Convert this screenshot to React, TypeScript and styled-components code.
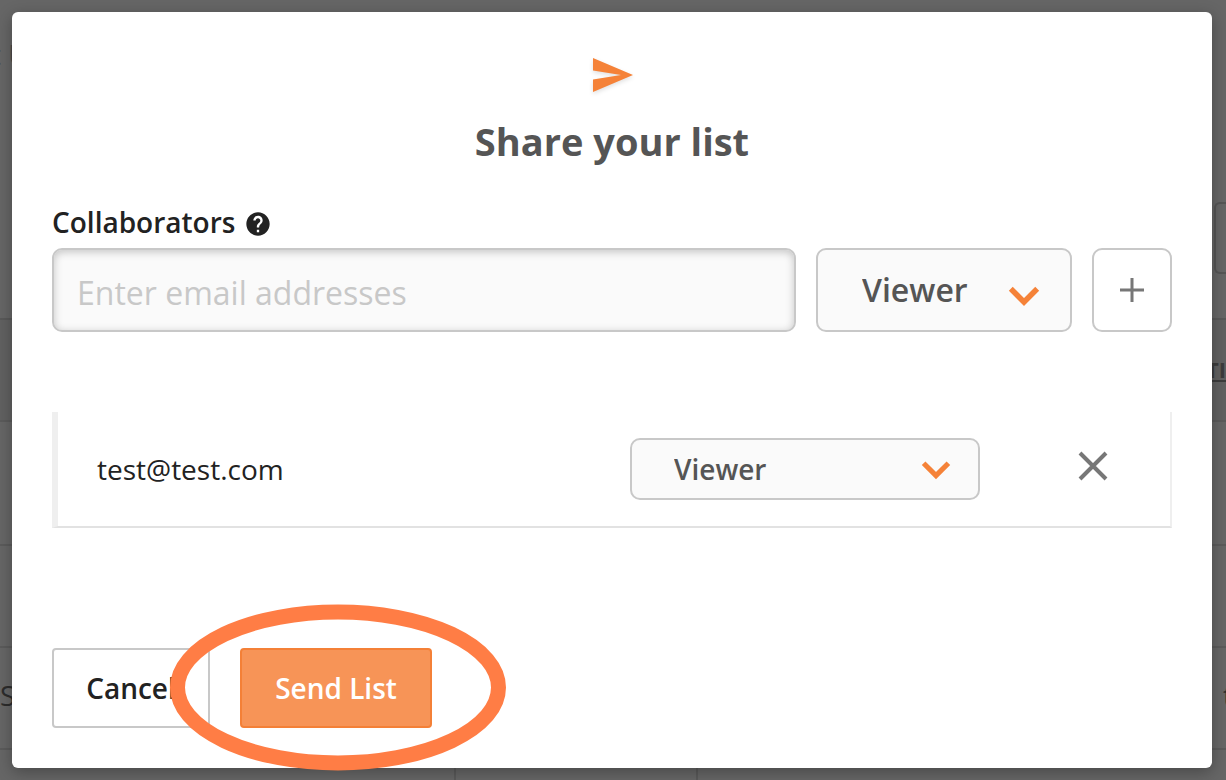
import React from "react";
import styled, { createGlobalStyle, css } from "styled-components";

const GlobalStyle = createGlobalStyle`
  *, *::before, *::after { box-sizing: border-box; }
  body {
    margin: 0;
    background: #666;
    color: #222;
    font-family: "Open Sans", "Noto Sans", sans-serif;
    font-size: 28px;
    line-height: 40px;
  }
  button, input, select { font: inherit; color: inherit; margin: 0; }
`;

const Screen = styled.div`
  position: relative;
  min-height: 100vh;
  overflow: hidden;
`;

const Backdrop = styled.div`
  position: absolute;
  inset: 0;
  overflow: hidden;
  background: #666;
`;

const PageTop = styled.div`
  height: 320px;
  border-bottom: 2px solid #595959;
  display: flex;
  justify-content: space-between;
  color: #4a4a4a;
`;

const PageTitle = styled.div`
  padding-top: 34px;
  margin-left: -9px;
`;

const PageFilter = styled.div`
  width: 12px;
  height: 72px;
  margin-top: 202px;
  border: 2px solid #555;
  border-right: 0;
  border-radius: 6px 0 0 6px;
`;

const PageRow = styled.div<{ $head?: boolean }>`
  display: flex;
  justify-content: space-between;
  align-items: center;
  height: 102px;
  padding-bottom: 6px;
  border-bottom: 2px solid #5b5b5b;
  color: #2c2c2c;
  ${(p) =>
    p.$head &&
    css`
      padding-bottom: 2px;
      background: #616161;
      color: #3c3c3c;
      font-size: 22px;
      font-weight: 700;
      text-decoration: underline;
    `}
`;

const PageRowTall = styled(PageRow)`
  height: 124px;
`;

const PageColumns = styled.div`
  display: grid;
  grid-template-columns: 454px 242px 1fr;
  height: 40px;

  > span + span {
    border-left: 2px solid #5a5a5a;
  }
`;

const Edge = styled.span<{ $width?: number }>`
  width: ${(p) => p.$width ?? 20}px;
  white-space: nowrap;
`;

const Dialog = styled.section`
  position: relative;
  margin: 12px 14px 12px 12px;
  padding: 40px;
  background: #fff;
  border-radius: 6px;
  box-shadow: 0 4px 16px rgba(0, 0, 0, 0.3);
`;

const Header = styled.header`
  display: flex;
  flex-direction: column;
  align-items: center;
  gap: 14px;
`;

const PlaneIcon = styled.svg`
  width: 48px;
  height: 48px;
  filter: drop-shadow(0 2px 2px rgba(0, 0, 0, 0.12));
`;

const Title = styled.h1`
  margin: 0;
  color: #555;
  font-size: 38px;
  line-height: 54px;
  font-weight: 700;
`;

const FieldLabel = styled.div`
  display: flex;
  align-items: center;
  gap: 9px;
  margin: 34px 0 6px;
  font-weight: 600;
`;

const HelpIcon = styled.svg`
  width: 28px;
  height: 28px;
  margin-top: 4px;
`;

const AddForm = styled.form`
  display: flex;
  gap: 20px;
`;

const EmailInput = styled.input`
  flex: 1;
  min-width: 0;
  height: 84px;
  padding: 4px 23px 0;
  border: 2px solid #c8c8c8;
  border-radius: 10px;
  background: #fafafa;
  box-shadow: inset 0 2px 8px rgba(0, 0, 0, 0.22);
  font-size: 32px;

  &::placeholder {
    color: #c8c8c8;
    opacity: 1;
  }
`;

const SelectBox = styled.div<{ $compact?: boolean }>`
  position: relative;
  width: ${(p) => (p.$compact ? 350 : 256)}px;
  height: ${(p) => (p.$compact ? 62 : 84)}px;
  font-size: ${(p) => (p.$compact ? 28 : 32)}px;
`;

const RoleSelect = styled.select<{ $compact?: boolean }>`
  appearance: none;
  width: 100%;
  height: 100%;
  padding: 0 64px 0 ${(p) => (p.$compact ? 42 : 44)}px;
  border: 2px solid #c8c8c8;
  border-radius: 10px;
  background: #fafafa;
  color: #555;
  font-weight: 600;
`;

const Chevron = styled.svg<{ $compact?: boolean }>`
  position: absolute;
  right: ${(p) => (p.$compact ? 29 : 32)}px;
  top: ${(p) => (p.$compact ? 22 : 38)}px;
  width: ${(p) => (p.$compact ? 30 : 32)}px;
  height: 20px;
  pointer-events: none;
`;

const AddButton = styled.button`
  display: grid;
  place-items: center;
  width: 80px;
  height: 84px;
  padding: 0;
  border: 2px solid #c8c8c8;
  border-radius: 10px;
  background: #fff;
`;

const People = styled.ul`
  list-style: none;
  margin: 80px 0 0;
  padding: 0;
`;

const Person = styled.li`
  display: flex;
  align-items: center;
  height: 116px;
  padding: 0 60px 0 39px;
  border-left: 6px solid #efefef;
  border-right: 2px solid #efefef;
  border-bottom: 2px solid #e2e2e2;
`;

const Email = styled.span`
  flex: 1;
`;

const RemoveButton = styled.button`
  display: grid;
  place-items: center;
  width: 34px;
  height: 40px;
  margin: 0 0 6px 96px;
  padding: 0;
  border: 0;
  background: none;
`;

const Actions = styled.footer`
  display: flex;
  gap: 30px;
  margin-top: 120px;
`;

const ActionButton = styled.button<{ $primary?: boolean }>`
  min-width: ${(p) => (p.$primary ? 192 : 158)}px;
  height: 80px;
  padding: 0 31px;
  border: 2px solid ${(p) => (p.$primary ? "#f48037" : "#c8c8c8")};
  border-radius: 4px;
  background: ${(p) => (p.$primary ? "#f79457" : "#fff")};
  color: ${(p) => (p.$primary ? "#fff" : "#222")};
  font-weight: 600;
`;

const SendWrap = styled.div`
  position: relative;
`;

const Highlight = styled.svg`
  position: absolute;
  left: -72px;
  top: -46px;
  width: 340px;
  height: 170px;
  pointer-events: none;
`;

function RolePicker({ label, compact }: { label: string; compact?: boolean }) {
  return (
    <SelectBox $compact={compact}>
      <RoleSelect $compact={compact} aria-label={label} defaultValue="Viewer">
        <option>Viewer</option>
        <option>Editor</option>
      </RoleSelect>
      <Chevron $compact={compact} viewBox="0 0 32 20" aria-hidden="true">
        <path d="M2.800 2.800 16 16 29.200 2.800" fill="none" stroke="#f58238" strokeWidth="5.500" />
      </Chevron>
    </SelectBox>
  );
}

export default function App() {
  return (
    <Screen>
      <GlobalStyle />
      <Backdrop aria-hidden="true">
        <PageTop>
          <PageTitle>t U</PageTitle>
          <PageFilter />
        </PageTop>
        <PageRow $head>
          <Edge />
          <Edge>TI</Edge>
        </PageRow>
        <PageRowTall />
        <PageRow />
        <PageRow>
          <Edge>S</Edge>
          <Edge $width={3}>t</Edge>
        </PageRow>
        <PageColumns>
          <span />
          <span />
          <span />
        </PageColumns>
      </Backdrop>

      <Dialog role="dialog" aria-labelledby="share-title">
        <Header>
          <PlaneIcon viewBox="0 0 48 48" aria-hidden="true">
            <path d="M5 6 45 23 5 40V27.500L33 23 5 18.500Z" fill="#f58238" />
          </PlaneIcon>
          <Title id="share-title">Share your list</Title>
        </Header>

        <FieldLabel>
          <label htmlFor="email">Collaborators</label>
          <HelpIcon viewBox="0 0 24 24" role="img" aria-label="Help">
            <path
              fill="#222"
              d="M12 2C6.480 2 2 6.480 2 12s4.480 10 10 10 10-4.480 10-10S17.520 2 12 2zm1 17h-2v-2h2v2zm2.070-7.750-.9.920C13.450 12.900 13 13.500 13 15h-2v-.5c0-1.100.450-2.100 1.170-2.830l1.240-1.260c.370-.360.590-.860.590-1.410 0-1.100-.9-2-2-2s-2 .9-2 2H8c0-2.210 1.790-4 4-4s4 1.790 4 4c0 .880-.360 1.680-.930 2.250z"
            />
          </HelpIcon>
        </FieldLabel>

        <AddForm onSubmit={(e) => e.preventDefault()}>
          <EmailInput id="email" type="email" placeholder="Enter email addresses" />
          <RolePicker label="Role for new collaborators" />
          <AddButton type="submit" aria-label="Add collaborator">
            <svg width="24" height="24" viewBox="0 0 24 24" aria-hidden="true">
              <path d="M12 0V24M0 12H24" stroke="#777" strokeWidth="3" />
            </svg>
          </AddButton>
        </AddForm>

        <People>
          <Person>
            <Email>test@test.com</Email>
            <RolePicker label="Role for test@test.com" compact />
            <RemoveButton type="button" aria-label="Remove test@test.com">
              <svg width="30" height="30" viewBox="0 0 30 30" aria-hidden="true">
                <path d="M2 2 28 28M28 2 2 28" stroke="#777" strokeWidth="4" />
              </svg>
            </RemoveButton>
          </Person>
        </People>

        <Actions>
          <ActionButton type="button">Cancel</ActionButton>
          <SendWrap>
            <ActionButton type="button" $primary>
              Send List
            </ActionButton>
            <Highlight viewBox="0 0 340 170" aria-hidden="true">
              <ellipse cx="170" cy="85.500" rx="160.500" ry="75.500" fill="none" stroke="#ff7d45" strokeWidth="15" />
            </Highlight>
          </SendWrap>
        </Actions>
      </Dialog>
    </Screen>
  );
}
